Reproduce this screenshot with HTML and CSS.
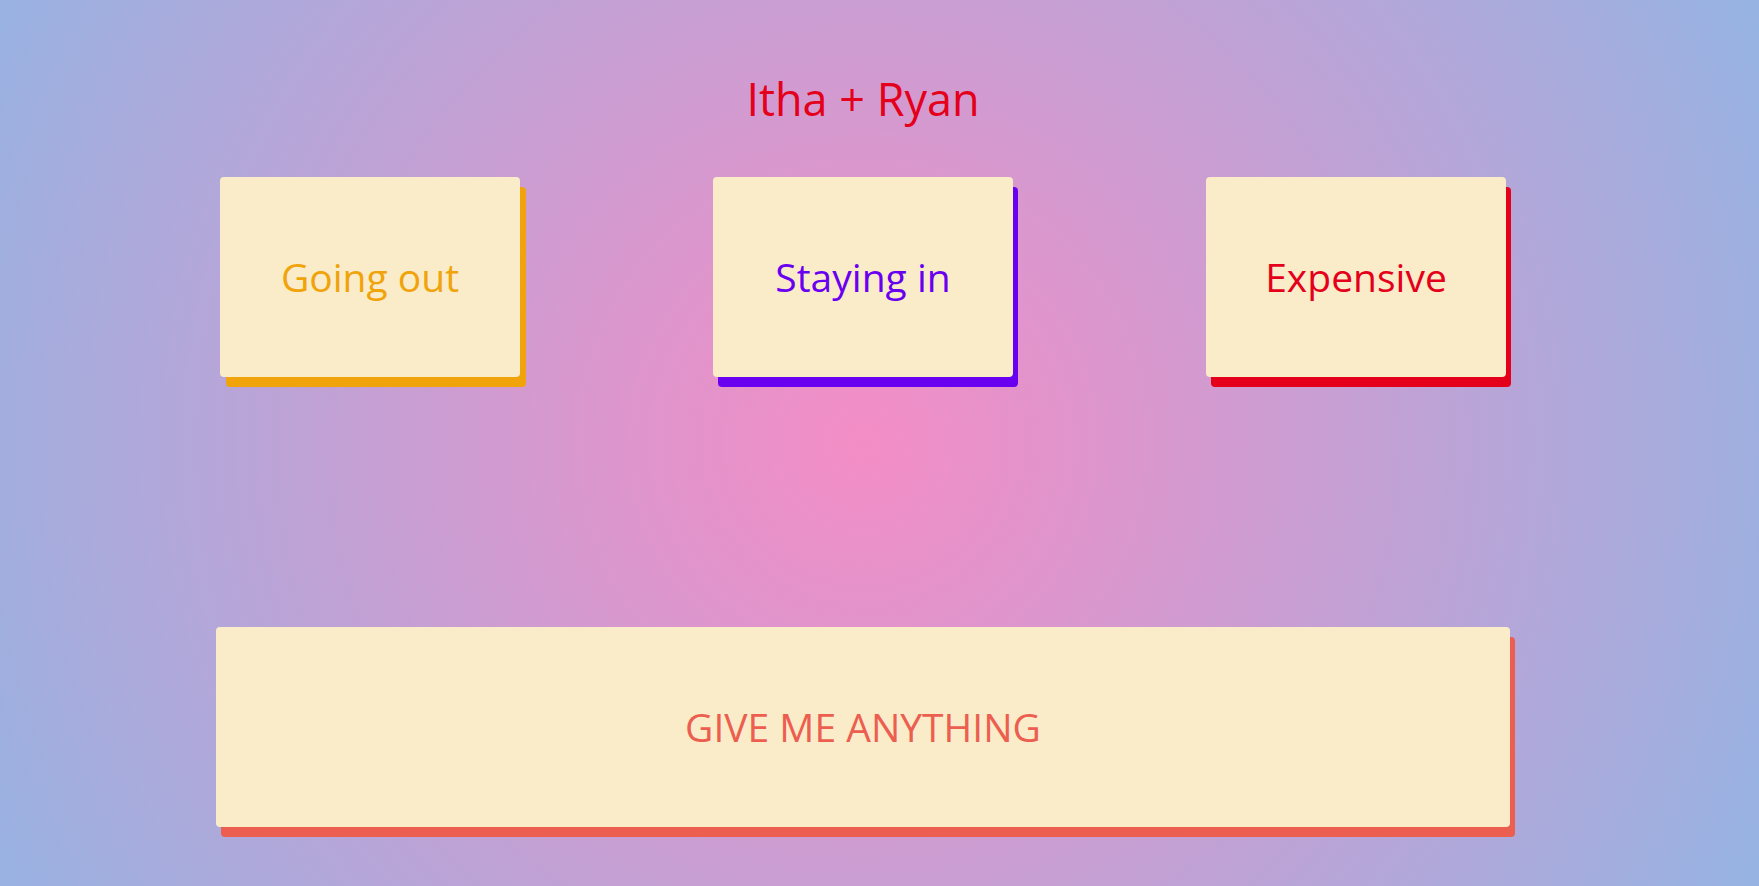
FILE: index.html
```html
<!DOCTYPE html>
<html lang="en">
<head>
<meta charset="utf-8">
<title>Itha + Ryan</title>
<link rel="stylesheet" href="styles.css">
</head>
<body>
<main class="page">
  <h1 class="title">Itha + Ryan</h1>
  <div class="choices">
    <button class="card card-out">Going out</button>
    <button class="card card-in">Staying in</button>
    <button class="card card-exp">Expensive</button>
  </div>
  <button class="card card-any">GIVE ME ANYTHING</button>
</main>
</body>
</html>
```
FILE: styles.css
```css
html, body {
  margin: 0;
  padding: 0;
}
body {
  min-height: 100vh;
  box-sizing: border-box;
  padding-right: 33px;
  font-family: "Open Sans", "Noto Sans", sans-serif;
  background: radial-gradient(circle farthest-corner at 863px 50%, #f48dc6 0%, #95b3e2 100%);
}
.page {
  width: 1294px;
  margin: 0 auto;
  padding-top: 76px;
  display: flex;
  flex-direction: column;
}
.title {
  margin: 0;
  font-size: 45px;
  line-height: 1;
  font-weight: 400;
  text-align: center;
  color: #e4001b;
}
.choices {
  margin-top: 56px;
  padding: 0 4px;
  display: flex;
  justify-content: space-between;
}
.card {
  border: 0;
  margin: 0;
  padding: 0 0 2px;
  width: 300px;
  height: 200px;
  border-radius: 4px;
  background: #faecc8;
  font-family: inherit;
  font-size: 39px;
  font-weight: 400;
  display: flex;
  align-items: center;
  justify-content: center;
  cursor: pointer;
}
.card-out {
  color: #f0a30b;
  box-shadow: 6px 10px 0 #f0a30b;
}
.card-in {
  color: #6a00f0;
  box-shadow: 5px 10px 0 #6a00f0;
}
.card-exp {
  color: #e4001b;
  box-shadow: 5px 10px 0 #e4001b;
}
.card-any {
  width: 1294px;
  margin-top: 250px;
  color: #ec5e50;
  box-shadow: 5px 10px 0 #ec5e50;
}
```
